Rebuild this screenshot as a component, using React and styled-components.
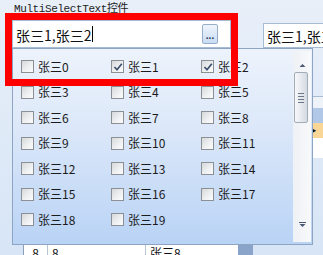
import React from 'react'
import styled, { createGlobalStyle } from 'styled-components'

const GlobalStyle = createGlobalStyle`
  body {
    margin: 0;
    background: #dde8f6;
  }
`

const Page = styled.div`
  position: relative;
  width: 323px;
  height: 255px;
  overflow: hidden;
  background: linear-gradient(180deg, #e8eff9 0%, #d7e5f6 100%);
  font-family: "Noto Sans CJK SC", "Liberation Sans", sans-serif;
  color: #111;
`

const Title = styled.div`
  height: 20px;
  box-sizing: border-box;
  padding: 3px 0 0 14px;
  font-family: "Liberation Mono", "Noto Sans CJK SC", monospace;
  font-size: 11px;
  letter-spacing: -0.4px;
  line-height: 13px;
  color: #222;
`

const InputRow = styled.div`
  display: flex;
  align-items: flex-start;
  padding-left: 12px;
  height: 28px;
`

const TextBox = styled.div`
  display: flex;
  align-items: center;
  flex: none;
  box-sizing: border-box;
  width: ${p => p.$width}px;
  height: ${p => p.$height}px;
  margin: ${p => p.$margin || '0'};
  padding: 0 12px 0 3px;
  background: #fff;
  border: 1px solid #a8bbd4;
`

const InputText = styled.span`
  font-size: 14px;
  line-height: 18px;
  white-space: nowrap;
  padding-top: 1px;
`

const Caret = styled.span`
  display: inline-block;
  width: 1px;
  height: 16px;
  margin-left: 1px;
  background: #000;
`

const EllipsisButton = styled.div`
  margin-left: auto;
  width: 16px;
  height: 20px;
  box-sizing: border-box;
  border: 1px solid #97aecb;
  border-radius: 2px;
  background: linear-gradient(180deg, #eef4fc 0%, #c9dcf4 100%);
  display: flex;
  align-items: flex-end;
  justify-content: center;
  font-family: "Liberation Sans", sans-serif;
  font-size: 10px;
  font-weight: bold;
  line-height: 10px;
  color: #2b3b55;
  padding-bottom: 2px;
`

const GridRow = styled.div`
  display: flex;
  align-items: flex-start;
  margin-top: 8px;
`

const DataGrid = styled.div`
  margin-left: 23px;
  width: 224px;
  background: #fff;
  border-left: 1px solid #8d9fb8;
  box-sizing: border-box;
`

const GridHeader = styled.div`
  height: 22px;
  background: #c7d9f1;
`

const GridLine = styled.div`
  display: grid;
  grid-template-columns: 24px 98px 1fr;
  height: 21px;
  font-size: 12px;
  line-height: 14px;
`

const Cell = styled.div`
  border-right: 1px solid #b8c4d4;
  padding-left: ${p => (p.$center ? 0 : 4)}px;
  text-align: ${p => (p.$center ? 'center' : 'left')};
  &:last-child {
    border-right: none;
  }
`

const GridScroll = styled.div`
  width: 15px;
  height: 220px;
  background: #8aa3c8;
`

const SideGrid = styled.div`
  margin-left: 51px;
  margin-top: 40px;
  width: 20px;
  border-top: 1px solid #a9bbd3;
  background: #fff;
`

const SideBand = styled.div`
  height: ${p => p.$h}px;
  background: ${p => p.$bg};
  font-size: 11px;
  line-height: ${p => p.$h}px;
  padding-left: 2px;
`

const Panel = styled.div`
  position: absolute;
  left: 12px;
  top: 48px;
  width: 301px;
  height: 197px;
  box-sizing: border-box;
  display: flex;
  border: 1px solid #8ea4c3;
  background: linear-gradient(180deg, #edf3fc 0%, #dce8f9 40%, #b9d3f5 100%);
`

const OptionList = styled.div`
  flex: 1;
  display: grid;
  grid-template-columns: repeat(3, 90px);
  grid-auto-rows: 25.5px;
  padding: 5px 0 0 8px;
`

const Option = styled.label`
  display: flex;
  align-items: center;
  gap: 4px;
  font-size: 12px;
  line-height: 14px;
  color: #1b1b1b;
`

const Check = styled.span`
  display: flex;
  align-items: center;
  justify-content: center;
  width: 13px;
  height: 13px;
  box-sizing: border-box;
  border: 1px solid #8c8f94;
  background: linear-gradient(135deg, #d6d8db 0%, #f0f1f2 60%, #fbfbfb 100%);
`

const ScrollBar = styled.div`
  width: 18px;
  margin: 2px 1px 2px 0;
  display: flex;
  flex-direction: column;
  background: linear-gradient(90deg, #eef1f5 0%, #f8f9fb 100%);
`

const ScrollArrow = styled.div`
  height: 20px;
  display: flex;
  justify-content: center;
  align-items: ${p => (p.$down ? 'flex-start' : 'flex-end')};
  padding: ${p => (p.$down ? '0 0 4px' : '0 0 3px')};
  box-sizing: border-box;
`

const ScrollTrack = styled.div`
  flex: 1;
  padding-top: 1px;
`

const ScrollThumb = styled.div`
  width: 14px;
  height: 51px;
  margin-left: 1px;
  box-sizing: border-box;
  border: 1px solid #a2acb9;
  border-radius: 2px;
  background: linear-gradient(90deg, #f7f8fa 0%, #e3e7ec 60%, #d4dae2 100%);
  display: flex;
  flex-direction: column;
  align-items: center;
  justify-content: center;
  gap: 2px;
`

const Grip = styled.span`
  width: 6px;
  height: 1px;
  background: #6b7687;
`

const Highlight = styled.div`
  position: absolute;
  left: 5px;
  top: 13px;
  width: 233px;
  height: 73px;
  box-sizing: border-box;
  border: 7px solid #f00;
  pointer-events: none;
`

const Tick = () => (
  <svg width="10" height="10" viewBox="0 0 10 10">
    <path d="M1.5 5 L4 7.8 L8.8 1.8" fill="none" stroke="#3d4f6e" strokeWidth="1.7" />
  </svg>
)

const Arrow = ({ down }) => (
  <svg width="7" height="5" viewBox="0 0 7 5">
    {down ? (
      <>
        <rect x="0" y="0" width="7" height="1" fill="#4a5a76" />
        <path d="M0.5 2 L6.5 2 L3.5 5 Z" fill="#4a5a76" />
      </>
    ) : (
      <path d="M0.5 4 L6.5 4 L3.5 1 Z" fill="#4a5a76" />
    )}
  </svg>
)

const options = Array.from({ length: 20 }, (_, i) => ({
  label: `张三${i}`,
  checked: i === 1 || i === 2,
}))

export default function App() {
  return (
    <Page>
      <GlobalStyle />
      <Title>MultiSelectText控件</Title>
      <InputRow>
        <TextBox $width={219} $height={28}>
          <InputText>张三1,张三2</InputText>
          <Caret />
          <EllipsisButton>...</EllipsisButton>
        </TextBox>
        <TextBox $width={80} $height={25} $margin="3px 0 0 32px">
          <InputText>张三1,张三2</InputText>
        </TextBox>
      </InputRow>
      <GridRow>
        <DataGrid>
          <GridHeader />
          {Array.from({ length: 9 }, (_, i) => (
            <GridLine key={i}>
              <Cell $center>{i}</Cell>
              <Cell>{i}</Cell>
              <Cell>张三{i}</Cell>
            </GridLine>
          ))}
        </DataGrid>
        <GridScroll />
        <SideGrid>
          <SideBand $h={11} $bg="#eef3fa" />
          <SideBand $h={15} $bg="#b2c8e8" />
          <SideBand $h={15} $bg="#f9d596">▶</SideBand>
          <SideBand $h={20} $bg="#fff">2</SideBand>
        </SideGrid>
      </GridRow>

      <Panel>
        <OptionList>
          {options.map(o => (
            <Option key={o.label}>
              <Check>{o.checked && <Tick />}</Check>
              {o.label}
            </Option>
          ))}
        </OptionList>
        <ScrollBar>
          <ScrollArrow>
            <Arrow />
          </ScrollArrow>
          <ScrollTrack>
            <ScrollThumb>
              <Grip />
              <Grip />
              <Grip />
              <Grip />
            </ScrollThumb>
          </ScrollTrack>
          <ScrollArrow $down>
            <Arrow down />
          </ScrollArrow>
        </ScrollBar>
      </Panel>

      <Highlight />
    </Page>
  )
}
